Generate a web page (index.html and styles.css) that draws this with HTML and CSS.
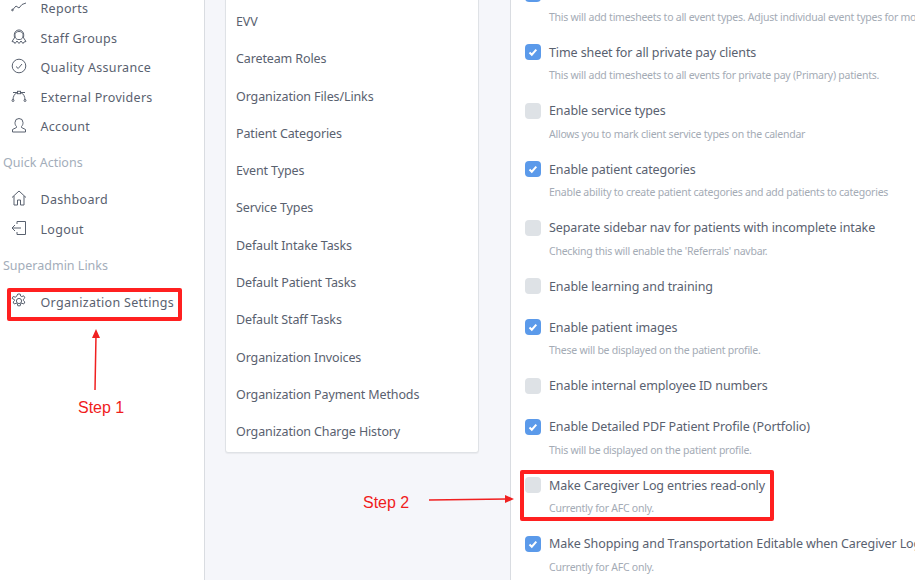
FILE: index.html
```html
<!DOCTYPE html>
<html lang="en">
<head>
<meta charset="utf-8">
<title>Organization Settings</title>
<link rel="stylesheet" href="styles.css">
</head>
<body>
<div class="page">
  <aside class="sidebar">
    <nav class="nav">
      <a class="nav-item"><svg class="ico" viewBox="0 0 16 16"><path d="M1 11.500 5 7l3 2 3-3.500 4-1.500"/><circle cx="1.500" cy="11" r=".8"/></svg>Reports</a>
      <a class="nav-item"><svg class="ico" viewBox="0 0 16 16"><path d="M3.500 8.500C2.500 3.500 5 1 8 1s5.500 2.500 4.500 7.500M5 9.500c-1-1.500-1-3-1-4 0-2 2-3 4-3s4 1 4 3c0 1 0 2.500-1 4-1 1-1.500 1-3 1s-2-0-3-1z"/><path d="M4 8 1 12.500l2 .5 1 1.500 2-2.500 2 2.500 2-2.500 2 2.500 1-1.500 2-.5L12 8"/></svg>Staff Groups</a>
      <a class="nav-item"><svg class="ico" viewBox="0 0 16 16"><circle cx="8" cy="8" r="6.800"/><path d="m5 8.500 2.200 2L11 6"/></svg>Quality Assurance</a>
      <a class="nav-item"><svg class="ico" viewBox="0 0 16 16"><path d="M2 4.500h4.500M9.500 4.500H14M2 12c0-3.500 1.500-6.500 4.500-7.500M14 12c0-3.500-1.500-6.500-4.500-7.500"/><rect x="6.500" y="3.300" width="3" height="2.400"/><circle cx="2" cy="12.500" r="1"/><circle cx="14" cy="12.500" r="1"/></svg>External Providers</a>
      <a class="nav-item"><svg class="ico" viewBox="0 0 16 16"><path d="M5.500 9.500C4 8 4 6.500 4 5.500a4 4 0 0 1 8 0c0 1 0 2.500-1.500 4v1l4 2V15H1.500v-2.500l4-2z"/></svg>Account</a>
    </nav>
    <div class="nav-title">Quick Actions</div>
    <nav class="nav">
      <a class="nav-item"><svg class="ico" viewBox="0 0 16 16"><path d="M1 7.500 8 1l7 6.500M3 6v9h3.500v-5h3v5H13V6"/></svg>Dashboard</a>
      <a class="nav-item"><svg class="ico" viewBox="0 0 16 16"><path d="M6 4V1.500h8.500v13H6V12M10 8H1M4 5 1 8l3 3"/></svg>Logout</a>
    </nav>
    <div class="nav-title">Superadmin Links</div>
    <nav class="nav">
      <a class="nav-item"><svg class="ico" viewBox="0 0 16 16"><circle cx="8" cy="8" r="2.600"/><path d="m6.800 1h2.400l.4 2 1.200.6 1.900-.8 1.200 2-1.500 1.400v1.400l1.500 1.400-1.200 2-1.900-.8-1.200.6-.4 2H6.800l-.4-2-1.200-.6-1.900.8-1.200-2 1.500-1.400V6.800L1.100 5.400l1.200-2 1.900.8 1.200-.6z"/></svg>Organization Settings</a>
    </nav>
  </aside>

  <main class="middle">
    <ul class="card">
      <li>EVV</li>
      <li>Careteam Roles</li>
      <li>Organization Files/Links</li>
      <li>Patient Categories</li>
      <li>Event Types</li>
      <li>Service Types</li>
      <li>Default Intake Tasks</li>
      <li>Default Patient Tasks</li>
      <li>Default Staff Tasks</li>
      <li>Organization Invoices</li>
      <li>Organization Payment Methods</li>
      <li>Organization Charge History</li>
    </ul>
  </main>

  <section class="panel">
    <div class="opt"><div class="opt-head"><span class="box on"><svg viewBox="0 0 16 16"><path d="m4.500 8.500 2.300 2.200 4.500-5"/></svg></span><span class="opt-label">Time sheet for all events</span></div><p class="opt-sub">This will add timesheets to all event types. Adjust individual event types for more control over timesheets on events.</p></div>
    <div class="opt"><div class="opt-head"><span class="box on"><svg viewBox="0 0 16 16"><path d="m4.500 8.500 2.300 2.200 4.500-5"/></svg></span><span class="opt-label">Time sheet for all private pay clients</span></div><p class="opt-sub">This will add timesheets to all events for private pay (Primary) patients.</p></div>
    <div class="opt"><div class="opt-head"><span class="box"></span><span class="opt-label">Enable service types</span></div><p class="opt-sub">Allows you to mark client service types on the calendar</p></div>
    <div class="opt"><div class="opt-head"><span class="box on"><svg viewBox="0 0 16 16"><path d="m4.500 8.500 2.300 2.200 4.500-5"/></svg></span><span class="opt-label">Enable patient categories</span></div><p class="opt-sub">Enable ability to create patient categories and add patients to categories</p></div>
    <div class="opt"><div class="opt-head"><span class="box"></span><span class="opt-label">Separate sidebar nav for patients with incomplete intake</span></div><p class="opt-sub">Checking this will enable the 'Referrals' navbar.</p></div>
    <div class="opt"><div class="opt-head"><span class="box"></span><span class="opt-label">Enable learning and training</span></div></div>
    <div class="opt"><div class="opt-head"><span class="box on"><svg viewBox="0 0 16 16"><path d="m4.500 8.500 2.300 2.200 4.500-5"/></svg></span><span class="opt-label">Enable patient images</span></div><p class="opt-sub">These will be displayed on the patient profile.</p></div>
    <div class="opt"><div class="opt-head"><span class="box"></span><span class="opt-label">Enable internal employee ID numbers</span></div></div>
    <div class="opt"><div class="opt-head"><span class="box on"><svg viewBox="0 0 16 16"><path d="m4.500 8.500 2.300 2.200 4.500-5"/></svg></span><span class="opt-label">Enable Detailed PDF Patient Profile (Portfolio)</span></div><p class="opt-sub">This will be displayed on the patient profile.</p></div>
    <div class="opt"><div class="opt-head"><span class="box"></span><span class="opt-label">Make Caregiver Log entries read-only</span></div><p class="opt-sub">Currently for AFC only.</p></div>
    <div class="opt"><div class="opt-head"><span class="box on"><svg viewBox="0 0 16 16"><path d="m4.500 8.500 2.300 2.200 4.500-5"/></svg></span><span class="opt-label">Make Shopping and Transportation Editable when Caregiver Log entries are read-only</span></div><p class="opt-sub">Currently for AFC only.</p></div>
  </section>

  <div class="mark mark-one"></div>
  <div class="mark mark-two"></div>
  <span class="step step-one">Step 1</span>
  <span class="step step-two">Step 2</span>
  <svg class="arrows" viewBox="0 0 915 580">
    <path class="shaft" d="M95 390 96 335M429 500 507 499"/>
    <path class="head" d="M96 329 92 338h8zM514 499 505 495v8z"/>
  </svg>
</div>
</body>
</html>
```
FILE: styles.css
```css
* { box-sizing: border-box; }
html, body { margin: 0; height: 100%; }
body { font-family: "Noto Sans", sans-serif; color: #59616f; background: #f5f6fa; }
.page { position: relative; display: flex; width: 915px; height: 580px; overflow: hidden; }

.sidebar { flex: 0 0 205px; background: #fff; border-right: 1px solid #d9dce1; margin-top: -6.250px; height: 587px; }
.nav { display: flex; flex-direction: column; }
.nav-item { display: flex; align-items: center; height: 29.500px; padding-left: 11px; font-size: 12.500px; letter-spacing: .3px; color: #59616f; white-space: nowrap; }
.ico { flex: 0 0 16px; width: 16px; height: 16px; margin-right: 13.500px; margin-top: -3px; fill: none; stroke: #59616f; stroke-width: 1; }
.nav-title { height: 22px; line-height: 22px; margin: 10.600px 0 11.200px; padding-left: 3px; font-size: 12.500px; color: #a3adba; white-space: nowrap; }

.middle { flex: 0 0 304px; padding: 0 31px 0 20px; }
.card { list-style: none; margin: -20px 0 0; padding: 22px 0 1px; width: 254px; background: #fff; border: 1px solid #dfe2e6; border-radius: 3px; box-shadow: 0 1px 1px rgba(0,0,0,.05); }
.card li { height: 37.300px; line-height: 37.300px; padding-left: 10px; font-size: 12.500px; letter-spacing: -.12px; white-space: nowrap; }

.panel { flex: 1 1 0; min-width: 0; margin-top: -16.500px; height: 597px; background: #fff; border-left: 1px solid #d9dce1; padding-left: 14px; overflow: hidden; }
.opt { padding-bottom: 16px; }
.opt-head { display: flex; align-items: center; height: 20px; margin-bottom: 5px; }
.box { flex: 0 0 16px; width: 16px; height: 16px; margin-right: 8px; border-radius: 4px; background: #dee2e6; }
.box svg { display: block; width: 16px; height: 16px; fill: none; stroke: #fff; stroke-width: 2; }
.box.on { background: #5b9aea; }
.opt-label { font-size: 12.500px; letter-spacing: -.1px; white-space: nowrap; }
.opt-sub { margin: 0; height: 17.500px; line-height: 17.500px; padding-left: 24px; font-size: 10.500px; letter-spacing: -.24px; color: #a4abb5; white-space: nowrap; }

.mark { position: absolute; border: 4px solid #ff2020; border-radius: 2px; }
.mark-one { left: 7px; top: 288px; width: 175px; height: 33px; }
.mark-two { left: 520px; top: 470px; width: 254px; height: 51px; }
.step { position: absolute; font-family: "Liberation Sans", sans-serif; font-size: 16px; color: #f01c1c; white-space: nowrap; }
.step-one { left: 78px; top: 399px; }
.step-two { left: 363px; top: 494px; }
.arrows { position: absolute; left: 0; top: 0; width: 915px; height: 580px; pointer-events: none; }
.shaft { fill: none; stroke: #f02020; stroke-width: 1.500; }
.head { fill: #f02020; }
```
